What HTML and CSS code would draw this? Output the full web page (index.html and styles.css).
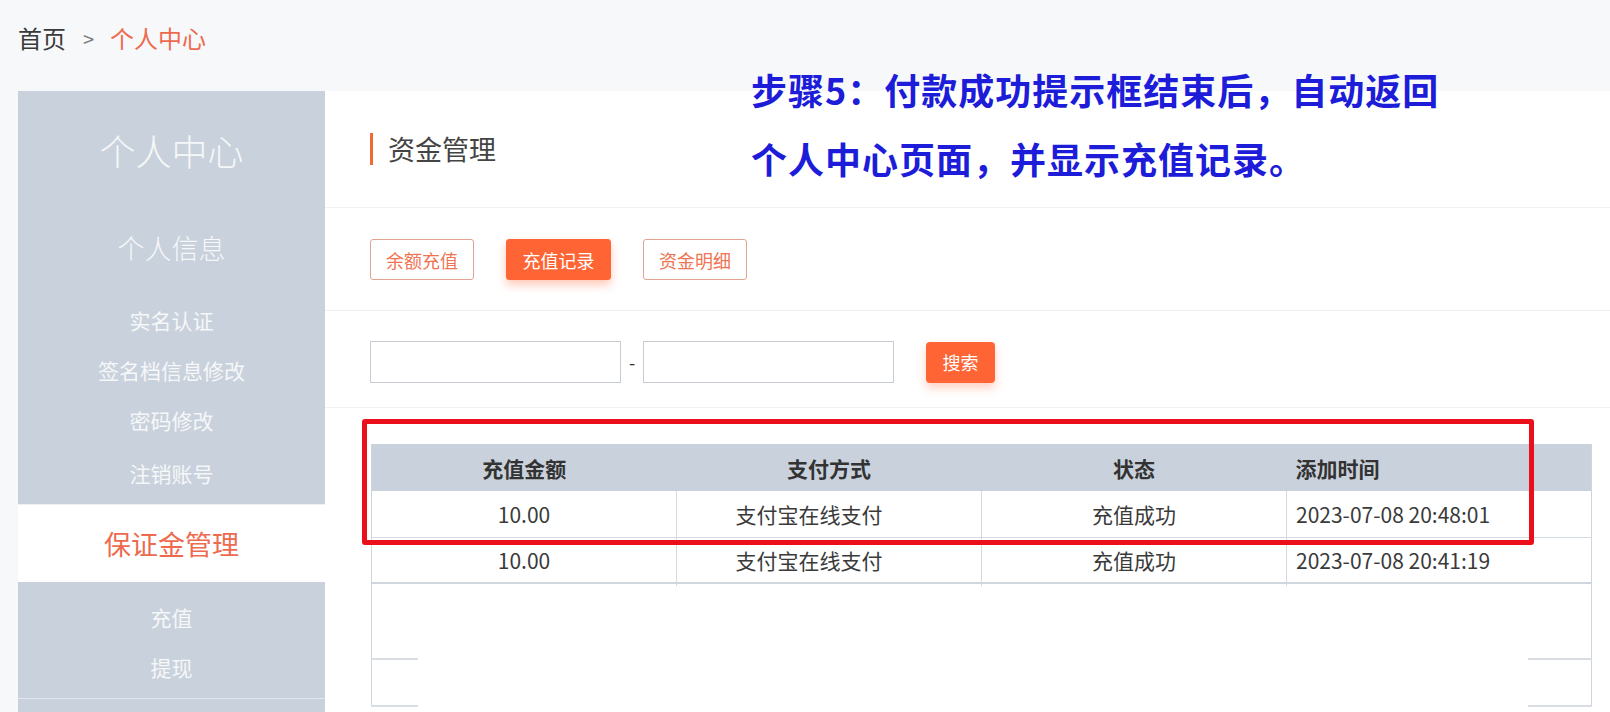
FILE: index.html
```html
<!DOCTYPE html>
<html lang="zh-CN">
<head>
<meta charset="utf-8">
<title>个人中心</title>
<link rel="stylesheet" href="styles.css">
</head>
<body>
<div class="page">
  <div class="crumb">
    <span class="crumb-home">首页</span>
    <span class="crumb-sep">&gt;</span>
    <span class="crumb-cur">个人中心</span>
  </div>
  <div class="layout">
    <aside class="side">
      <div class="side-block">
        <div class="side-title">个人中心</div>
        <div class="side-group">个人信息</div>
        <ul class="side-list first">
          <li>实名认证</li>
          <li>签名档信息修改</li>
          <li>密码修改</li>
          <li>注销账号</li>
        </ul>
      </div>
      <div class="side-active">保证金管理</div>
      <div class="side-block second">
        <ul class="side-list">
          <li>充值</li>
          <li>提现</li>
        </ul>
      </div>
    </aside>
    <main class="main">
      <div class="sec sec-head">
        <h2 class="title">资金管理</h2>
      </div>
      <div class="sec sec-tabs">
        <button class="btn btn-line">余额充值</button>
        <button class="btn btn-fill">充值记录</button>
        <button class="btn btn-line">资金明细</button>
      </div>
      <div class="sec sec-search">
        <input class="ipt" type="text">
        <span class="dash">-</span>
        <input class="ipt" type="text">
        <button class="btn-search">搜索</button>
      </div>
      <div class="sec-table">
        <div class="table-wrap">
          <table class="tbl">
            <thead>
              <tr>
                <th>充值金额</th>
                <th>支付方式</th>
                <th>状态</th>
                <th class="left">添加时间</th>
              </tr>
            </thead>
            <tbody>
              <tr>
                <td>10.00</td>
                <td class="pay">支付宝在线支付</td>
                <td>充值成功</td>
                <td class="left">2023-07-08 20:48:01</td>
              </tr>
              <tr class="last">
                <td>10.00</td>
                <td class="pay">支付宝在线支付</td>
                <td>充值成功</td>
                <td class="left">2023-07-08 20:41:19</td>
              </tr>
              <tr class="empty tall"><td></td><td></td><td></td><td></td></tr>
              <tr class="empty"><td></td><td></td><td></td><td></td></tr>
            </tbody>
          </table>
          <div class="cover"></div>
          <div class="highlight"></div>
        </div>
      </div>
    </main>
  </div>
  <div class="note">步骤5：付款成功提示框结束后，自动返回<br>个人中心页面，并显示充值记录。</div>
</div>
</body>
</html>
```

FILE: styles.css
```css
* { box-sizing: border-box; }
html, body {
  margin: 0;
  padding: 0;
  background: #f7f8fa;
  font-family: "Noto Sans CJK SC", "Open Sans", sans-serif;
  color: #333;
}
.page {
  position: relative;
  width: 1610px;
  height: 712px;
  overflow: hidden;
}
.crumb {
  height: 91px;
  padding: 24px 0 0 18px;
  display: flex;
  align-items: flex-start;
  font-size: 24px;
  line-height: 28px;
}
.crumb-home { color: #3a3a3a; }
.crumb-sep { color: #777; font-size: 20px; margin: 0 16px 0 17px; line-height: 30px; }
.crumb-cur { color: #ee6a4f; }

.layout {
  display: flex;
  align-items: stretch;
  height: 621px;
}
.side {
  width: 307px;
  margin-left: 18px;
  background: #c9d2dc;
  color: #f6f7f9;
  text-align: center;
  font-weight: 400;
}
.side-block { background: #c9d2dc; }
.side-title {
  height: 122px;
  line-height: 118px;
  font-size: 36px;
  font-weight: 300;
}
.side-group {
  height: 70px;
  line-height: 70px;
  font-size: 27px;
  font-weight: 300;
}
.side-list {
  list-style: none;
  margin: 0;
  padding: 12px 0 9px;
}
.side-list li {
  height: 50px;
  line-height: 50px;
  font-size: 21px;
}
.side-list.first li:last-child { height: 53px; line-height: 56px; }
.side-list.first { padding-bottom: 6px; }
.side-active {
  height: 78px;
  line-height: 78px;
  background: #fff;
  color: #ee6a4f;
  font-size: 27px;
  font-weight: 400;
  border-top: 1px solid #eef1f4;
}
.side-block.second {
  height: 117px;
  border-bottom: 1px solid #e2e7ec;
}
.side-block.second .side-list { padding: 10px 0 0; }

.main {
  flex: 1;
  background: #fff;
}
.sec {
  border-bottom: 1px solid #f0f1f3;
  padding-left: 45px;
  display: flex;
  align-items: center;
}
.sec-head { height: 117px; }
.title {
  margin: 0;
  font-size: 27px;
  font-weight: 400;
  color: #444;
  border-left: 3px solid #f06a35;
  padding-left: 15px;
  line-height: 32px;
  height: 32px;
}
.sec-tabs {
  height: 103px;
  gap: 32px;
  padding-top: 1px;
}
.btn {
  width: 104px;
  height: 41px;
  font-family: inherit;
  font-size: 18px;
  border-radius: 3px;
  padding: 0;
  cursor: pointer;
}
.btn-line {
  background: #fff;
  border: 1px solid #e4a290;
  color: #ef7452;
}
.btn-fill {
  width: 105px;
  background: #fe6434;
  border: 1px solid #fe6434;
  color: #fff;
  box-shadow: 0 5px 10px rgba(254, 100, 52, 0.35);
}
.sec-search {
  height: 97px;
  padding-top: 6px;
}
.ipt {
  width: 251px;
  height: 42px;
  border: 1px solid #c7ccd3;
  border-radius: 0;
  background: #fff;
  margin: 0;
  padding: 0;
}
.dash {
  width: 22px;
  text-align: center;
  font-size: 18px;
  color: #333;
}
.btn-search {
  margin-left: 32px;
  width: 69px;
  height: 41px;
  border: none;
  border-radius: 4px;
  background: #fe6434;
  color: #fff;
  font-family: inherit;
  font-size: 18px;
  box-shadow: 0 5px 10px rgba(254, 100, 52, 0.3);
}
.sec-table {
  padding: 36px 18px 0 46px;
}
.table-wrap {
  position: relative;
}
.tbl {
  width: 100%;
  border-collapse: collapse;
  table-layout: fixed;
  font-size: 21px;
  color: #3a3a3a;
  border-left: 1px solid #cfd5dc;
  border-right: 1px solid #cfd5dc;
}
.tbl th {
  height: 47px;
  background: #c9d2dc;
  font-weight: 700;
  color: #333;
  text-align: center;
  padding: 0;
}
.tbl td {
  height: 46px;
  text-align: center;
  padding: 0;
  border-bottom: 1px solid #d4dae1;
  border-left: 1px solid #d4dae1;
}
.tbl td:first-child { border-left: none; }
.tbl th.left, .tbl td.left { text-align: left; padding-left: 9px; }
.tbl td.pay { padding-right: 40px; }
.tbl tr.last td { border-bottom: 2px solid #d0d6dd; }
.tbl tr.empty td { height: 47px; border-bottom: 2px solid #d8dde3; }
.tbl tr.empty.tall td { height: 76px; }
.cover {
  position: absolute;
  left: 47px;
  right: 64px;
  top: 142px;
  bottom: -40px;
  background: #fff;
}
.highlight {
  position: absolute;
  left: -9px;
  top: -25px;
  width: 1172px;
  height: 126px;
  border: 5px solid #ea0f1b;
  border-radius: 3px;
}
.note {
  position: absolute;
  left: 751px;
  top: 55px;
  font-size: 36px;
  line-height: 69px;
  font-weight: 700;
  letter-spacing: 1px;
  color: #1c1cd9;
  white-space: nowrap;
  font-family: "Noto Sans CJK SC", "Liberation Sans", sans-serif;
}
```
